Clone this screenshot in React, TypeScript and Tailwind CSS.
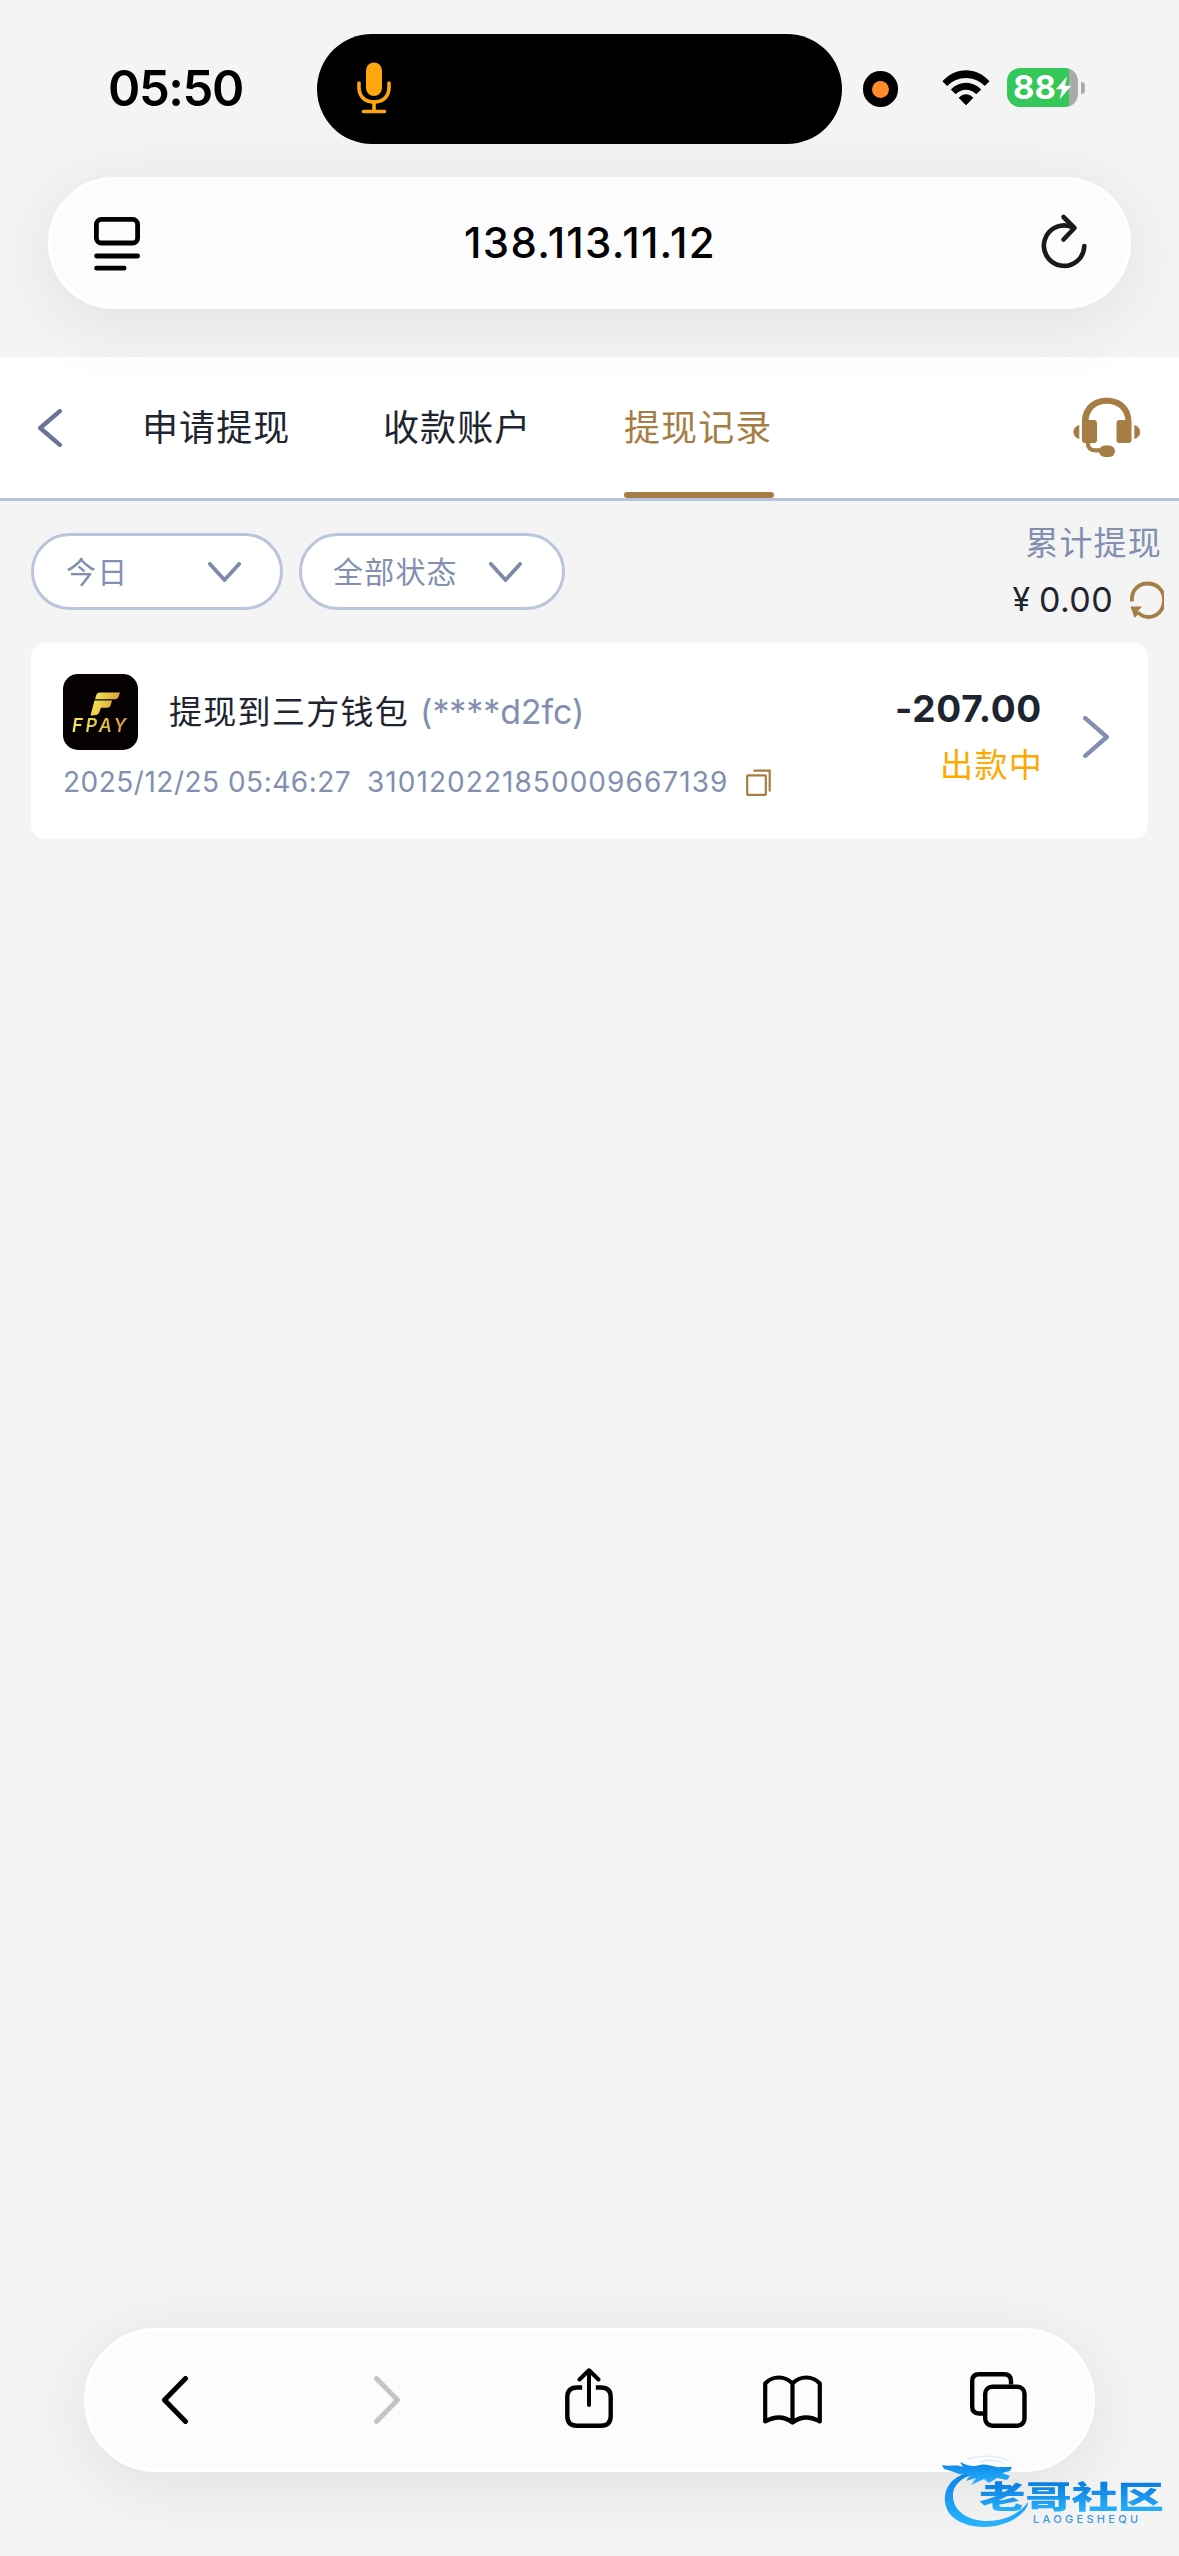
import React from "react";

function StatusBar() {
  return (
    <div className="flex h-[177px] items-start pt-[34px]">
      <div className="flex h-[110px] w-[317px] items-center pl-[108px] pb-px">
        <span className="whitespace-nowrap text-[49px] font-semibold leading-none tracking-[-1.400px] text-black">05:50</span>
      </div>
      <div className="h-[110px] w-[525px] shrink-0 rounded-full bg-black pl-[39px] pt-[28px]">
        <svg width="36" height="54" viewBox="0 0 36 54" fill="none" stroke="#ffa60c" strokeWidth="3.6" strokeLinecap="round">
          <rect x="10" y="0.500" width="16" height="33.500" rx="8" fill="#ffa60c" stroke="none" />
          <path d="M3 21v4.500c0 9 6 14.500 15 14.500s15-5.500 15-14.500V21" />
          <path d="M18 40v8.500M7.500 49.500h21" />
        </svg>
      </div>
      <div className="ml-[21px] mt-[37px] flex h-[36px] w-[35px] items-center justify-center rounded-full bg-black">
        <div className="h-[17px] w-[17px] rounded-full bg-[#ff8c28]" />
      </div>
      <svg className="ml-[43px] mt-[35px] shrink-0" width="50" height="38" viewBox="0 0 50 38">
        <path d="M1.500 12.200C14.500-2.500 35.500-2.500 48.500 12.200L43.800 17C33.500 6.300 16.500 6.300 6.200 17Z" fill="#000" />
        <path d="M9.800 20.500C18.300 11.500 31.700 11.500 40.200 20.500L35.300 25.300C29.500 19.200 20.500 19.200 14.700 25.300Z" fill="#000" />
        <path d="M18.200 28.800C22 24.800 28 24.800 31.800 28.800L25 35.800Z" fill="#000" stroke="#000" strokeWidth="1" strokeLinejoin="round" />
      </svg>
      <div className="ml-[16px] mt-[34px] flex items-center">
        <div className="flex h-[39px] w-[71px] items-center overflow-hidden rounded-[13px] bg-gradient-to-r from-[#34c759] from-[87.500%] to-[#aaaaaa] to-[87.500%] pl-[6px]">
          <span className="text-[33px] font-bold leading-none tracking-[0px] text-white">88</span>
          <svg className="-ml-px shrink-0" width="17" height="24" viewBox="0 0 17 24">
            <path d="M12 0.500L0.800 13.300H7L4.500 23.500L16.300 9.800H10Z" fill="#fff" />
          </svg>
        </div>
        <div className="ml-[3px] h-[12px] w-[4px] rounded-r-full bg-[#aaaaaa]" />
      </div>
    </div>
  );
}

function AddressBar() {
  return (
    <div className="relative z-10 mx-[48px] flex h-[132px] items-center justify-between rounded-full border-[3px] border-white bg-[#fcfcfc] pl-[43px] pr-[40px] shadow-[0_12px_75px_rgba(0,0,0,0.085)]">
      <svg width="46" height="56" viewBox="0 0 46 56" fill="none" stroke="#000" strokeWidth="4.800" strokeLinecap="round">
        <rect x="2.400" y="4.400" width="41.200" height="23.600" rx="5" />
        <path d="M2.600 41h41M2.600 53.200h27.500" />
      </svg>
      <span className="whitespace-nowrap text-[42px] font-medium leading-none tracking-[1.300px] text-black">138.113.11.12</span>
      <svg width="48" height="60" viewBox="0 0 48 60" fill="none" stroke="#1a1a1a" strokeWidth="4.600" strokeLinecap="round" strokeLinejoin="round">
        <path d="M44.300 33A20.200 20.200 0 1 1 33.500 14.800" />
        <path d="M23.500 4L34.500 15L23.500 26.500" />
      </svg>
    </div>
  );
}

function Chevron({ className, color, w, h, dir, sw }: { className?: string; color: string; w: number; h: number; dir: "left" | "right" | "down"; sw: number }) {
  const o = sw / 2;
  const d =
    dir === "left"
      ? `M${w - o} ${o}L${o} ${h / 2}L${w - o} ${h - o}`
      : dir === "right"
        ? `M${o} ${o}L${w - o} ${h / 2}L${o} ${h - o}`
        : `M${o} ${o}L${w / 2} ${h - o}L${w - o} ${o}`;
  return (
    <svg className={className} width={w} height={h} viewBox={`0 0 ${w} ${h}`} fill="none" stroke={color} strokeWidth={sw} strokeLinecap="round" strokeLinejoin="round">
      <path d={d} />
    </svg>
  );
}

function Tabs() {
  const tabs = ["申请提现", "收款账户", "提现记录"];
  return (
    <nav className="mt-[48px] flex h-[144px] items-stretch border-b-[3px] border-[#bac5db] bg-white">
      <div className="flex w-[142px] items-center pl-[38px]">
        <Chevron dir="left" w={24} h={38} sw={4.4} color="#6b7393" />
      </div>
      <div className="flex gap-[91px]">
        {tabs.map((t, i) => (
          <div key={t} className={i === 2 ? "relative flex w-[150px] items-center text-[#a67d44]" : "relative flex w-[150px] items-center text-[#1e2530]"}>
            <span className="whitespace-nowrap text-[36px] leading-none tracking-[1.100px]">{t}</span>
            {i === 2 && <div className="absolute bottom-0 left-0 h-[6px] w-full rounded-full bg-[#a67d44]" />}
          </div>
        ))}
      </div>
      <svg className="ml-auto mr-[38px] mt-[40px]" width="68" height="62" viewBox="0 0 68 62" fill="#a67d44">
        <path d="M9 25C9 10 19.500 0.800 33.800 0.800S58.500 10 58.500 25h-6C52.500 13.500 44.500 6.800 33.800 6.800S15.500 13.500 15.500 25Z" />
        <rect x="9" y="23" width="15" height="23" rx="3" />
        <rect x="43.500" y="23" width="15" height="23" rx="3" />
        <path d="M6.300 28v14C2.800 41 0.500 38.500 0.500 35s2.300-6 5.800-7ZM61.300 28v14c3.500-1 5.800-3.500 5.800-7s-2.300-6-5.800-7Z" />
        <path d="M14.800 45v1.500c0 4 3 6.800 7 6.800H30" fill="none" stroke="#a67d44" strokeWidth="4.200" />
        <rect x="26" y="48.500" width="16" height="11.500" rx="5.700" />
      </svg>
    </nav>
  );
}

function Filters() {
  return (
    <div className="flex h-[142px] items-start justify-between pl-[31px] pt-[32px]">
      <div className="flex gap-[16px]">
        <div className="flex h-[77px] w-[252px] items-center justify-between rounded-full border-[3px] border-[#bac5db] bg-white pl-[32px] pr-[39px]">
          <span className="text-[30px] leading-none tracking-[1.200px] text-[#838fb0]">今日</span>
          <Chevron dir="down" w={33} h={20} sw={3.8} color="#7f8aab" />
        </div>
        <div className="flex h-[77px] w-[266px] items-center justify-between rounded-full border-[3px] border-[#bac5db] bg-white pl-[31px] pr-[40px]">
          <span className="text-[30px] leading-none tracking-[1.200px] text-[#838fb0]">全部状态</span>
          <Chevron dir="down" w={33} h={20} sw={3.8} color="#7f8aab" />
        </div>
      </div>
      <div className="-mt-[9px] mr-[15px] flex flex-col items-end">
        <span className="mr-[2px] h-[38px] text-[33px] leading-[38px] tracking-[1.200px] text-[#838fb0]">累计提现</span>
        <div className="mt-[18px] flex items-center">
          <span className="mr-[9px] text-[32px] leading-[40px] text-[#1e2530]">¥</span>
          <span className="text-[34px] leading-[40px] tracking-[0.400px] text-[#1e2530]">0.00</span>
          <svg className="ml-[17px]" width="34" height="38" viewBox="0 0 34 38" fill="none">
            <path d="M2 20.500C1 10 8 2.500 17.500 2.500S34 9 34 19S27 36 18.500 36C14.500 36 11 34.500 8 31.500" stroke="#a67d44" strokeWidth="3.800" />
            <path d="M0.500 25.500h11.500L8 30l0.500 3L4.500 37Z" fill="#a67d44" />
          </svg>
        </div>
      </div>
    </div>
  );
}

function FpayLogo() {
  return (
    <div className="relative h-[76px] w-[75px] overflow-hidden rounded-[15px] bg-[#050102]">
      <svg className="absolute left-0 top-0" width="75" height="76" viewBox="0 0 75 76">
        <defs>
          <linearGradient id="gold" x1="0" y1="0" x2="1" y2="0.300">
            <stop offset="0" stopColor="#fbf35e" />
            <stop offset="1" stopColor="#d99f32" />
          </linearGradient>
        </defs>
        <path d="M36.500 18.500H57L55.500 23Q54.600 25.300 52 25.300H32L33.300 21Q34 18.500 36.500 18.500ZM31.500 26.500H49L47.700 31Q47 33.800 44 33.800H38L36 39Q35 41.500 27.500 41.500Z" fill="url(#gold)" />
      </svg>
      <span className="absolute left-[9px] top-[43px] bg-gradient-to-r from-[#f8ef58] to-[#cf952f] bg-clip-text pr-[3px] text-[18px] font-semibold italic leading-[18px] tracking-[3px] text-transparent">FPAY</span>
    </div>
  );
}

function RecordCard() {
  return (
    <div className="mx-[31px] flex h-[196px] items-start rounded-[14px] bg-white pl-[32px] pt-[31px]">
      <div className="flex flex-col">
        <div className="flex h-[76px] items-center">
          <FpayLogo />
          <span className="ml-[31px] whitespace-nowrap text-[33px] leading-none tracking-[1.300px] text-[#1e2530]">提现到三方钱包</span>
          <span className="ml-[11px] whitespace-nowrap text-[34px] leading-none tracking-[-0.100px] text-[#838fb0]">(****d2fc)</span>
        </div>
        <div className="mt-[16px] flex h-[32px] items-center text-[28px] leading-none text-[#838fb0]">
          <span className="w-[304px] whitespace-nowrap tracking-[0.500px]">2025/12/25 05:46:27</span>
          <span className="w-[379px] whitespace-nowrap tracking-[1.050px]">310120221850009667139</span>
          <svg width="25" height="27" viewBox="0 0 25 27" fill="none" stroke="#a67d44" strokeWidth="2.200">
            <rect x="1.200" y="6.300" width="18.600" height="19.500" rx="0.500" />
            <path d="M7.500 1.700H23.700V22.500" />
          </svg>
        </div>
      </div>
      <div className="ml-auto flex flex-col items-end pt-[15px]">
        <span className="whitespace-nowrap text-[37px] font-bold leading-[40px] tracking-[0.700px] text-[#1e2530]">-207.00</span>
        <span className="-mr-px mt-[16px] whitespace-nowrap text-[33px] leading-[40px] tracking-[1.300px] text-[#ffa800]">出款中</span>
      </div>
      <Chevron className="ml-[41px] mr-[39px] mt-[42px]" dir="right" w={26} h={42} sw={4.4} color="#838fb0" />
    </div>
  );
}

function Watermark() {
  return (
    <div className="absolute bottom-[22px] right-[14px] h-[80px] w-[226px]">
      <svg className="absolute left-0 top-0" width="100" height="80" viewBox="0 0 100 80">
        <defs>
          <linearGradient id="dragon" x1="0" y1="0" x2="0" y2="1">
            <stop offset="0" stopColor="#0a83e6" />
            <stop offset="1" stopColor="#2bb4fd" />
          </linearGradient>
        </defs>
        <path d="M28 19C6 25 1 45 10 59C22 75 55 78 77 64C84 59 89 54 89 48C80 60 66 67 49 67C28 67 15 57 14 43C13 33 20 25 34 20Z" fill="url(#dragon)" />
        <path d="M3 11C10 13 17 10 24 13L21 8C29 12 34 13 41 11C49 9 55 14 62 13L73 13L71 17L63 19L71 22L68 26L58 24L50 29L45 25L32 31L37 24L27 27L31 21L20 20L12 17L5 15Z" fill="url(#dragon)" />
        <path d="M29 5C43 0 59 2 70 7M41 8C50 5 58 6 65 9" fill="none" stroke="#dce9f5" strokeWidth="1.200" />
      </svg>
      <span className="absolute left-[40px] top-[26px] origin-left scale-x-[1.500] whitespace-nowrap bg-gradient-to-b from-[#0878e0] to-[#2bb4fd] bg-clip-text text-[31px] font-black leading-[34px] tracking-[-0.200px] text-transparent">老哥社区</span>
      <span className="absolute left-[94px] top-[59px] whitespace-nowrap text-[11px] font-medium leading-[12px] tracking-[3.300px] text-[#3f97dc]">LAOGESHEQU</span>
    </div>
  );
}

function Toolbar() {
  return (
    <div className="relative mx-[84px] flex h-[144px] items-center rounded-full border-[3px] border-white bg-[#fcfcfc] shadow-[0_12px_75px_rgba(0,0,0,0.085)]">
      <Chevron className="ml-[75px]" dir="left" w={26} h={48} sw={5} color="#000" />
      <Chevron className="ml-[186px]" dir="right" w={26} h={48} sw={5} color="#c4c4c6" />
      <svg className="ml-[165px] -mt-[4px]" width="48" height="60" viewBox="0 0 48 60" fill="none" stroke="#000" strokeWidth="4.400" strokeLinecap="round" strokeLinejoin="round">
        <path d="M17.200 19.500H12Q2.300 19.500 2.300 29V48Q2.300 57.700 12 57.700H36Q45.700 57.700 45.700 48V29Q45.700 19.500 36 19.500H30.800" strokeLinecap="butt" />
        <path d="M24 37V2.500M14.500 11.500L24 2.300L33.500 11.500" strokeWidth="4" />
      </svg>
      <svg className="ml-[150px]" width="59" height="50" viewBox="0 0 59 50" fill="none" stroke="#000" strokeWidth="4.200" strokeLinecap="round" strokeLinejoin="round">
        <path d="M29.500 8.500C22 0.500 9.500 0.500 2.200 8.500V46.500C11 41.500 21 41 29.500 47.500C38 41 48 41.500 56.800 46.500V8.500C49.500 0.500 37 0.500 29.500 8.500ZM29.500 8.500V47.500" />
      </svg>
      <svg className="ml-[148px]" width="57" height="56" viewBox="0 0 57 56" fill="none" stroke="#000" strokeWidth="4.400">
        <path d="M13 41.500H9Q2.200 41.500 2.200 34.500V9Q2.200 2.200 9 2.200H34Q41 2.200 41 9V12.500" />
        <rect x="15.200" y="14.700" width="39.300" height="39" rx="7" />
      </svg>
    </div>
  );
}

export default function App() {
  return (
    <div className="relative flex h-[2556px] w-[1179px] flex-col overflow-hidden bg-[#f4f4f4] font-['Inter','Noto_Sans_CJK_SC',sans-serif]">
      <StatusBar />
      <AddressBar />
      <Tabs />
      <Filters />
      <RecordCard />
      <div className="mb-[84px] mt-auto">
        <Toolbar />
      </div>
      <Watermark />
    </div>
  );
}
